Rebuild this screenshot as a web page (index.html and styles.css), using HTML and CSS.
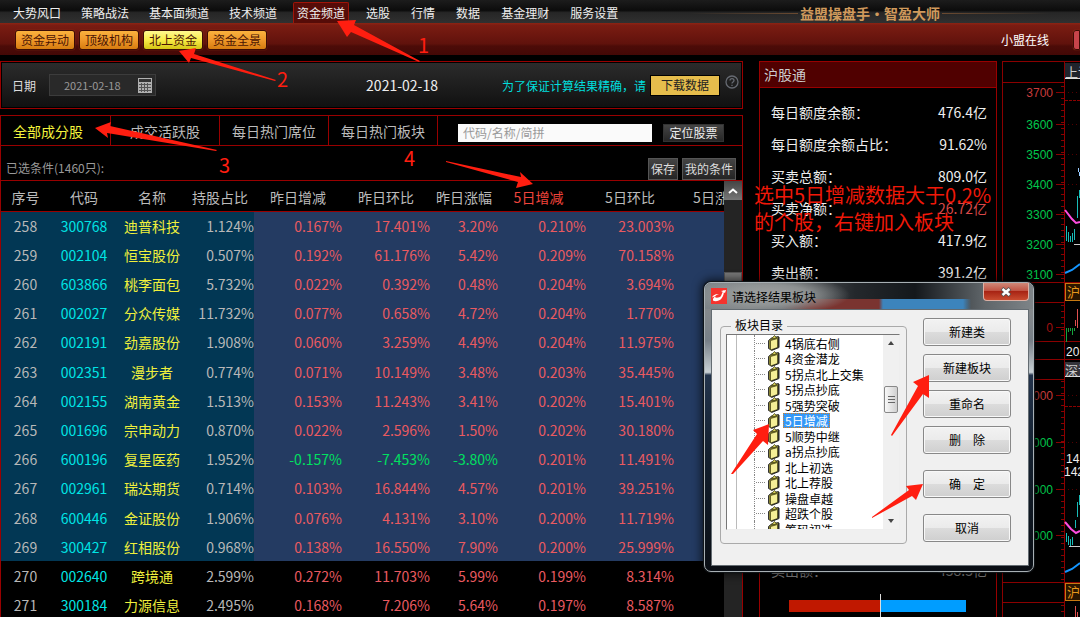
FILE: index.html
```html
<!DOCTYPE html>
<html lang="zh-CN">
<head>
<meta charset="utf-8">
<title>益盟操盘手·智盈大师</title>
<link rel="stylesheet" href="styles.css">
</head>
<body>
<header class="topbar">
  <nav class="menu">
    <a href="#">大势风口</a><a href="#">策略战法</a><a href="#">基本面频道</a><a href="#">技术频道</a><a href="#" class="active">资金频道</a><a href="#">选股</a><a href="#">行情</a><a href="#">数据</a><a href="#">基金理财</a><a href="#">服务设置</a>
  </nav>
  <div class="brand"><span>益盟操盘手·智盈大师</span></div>
</header>
<div class="subbar">
  <button>资金异动</button><button>顶级机构</button><button class="active">北上资金</button><button>资金全景</button>
  <a href="#" class="online">小盟在线</a>
  <button class="edge" aria-label="客服"></button>
</div>
<main class="main">
  <div class="left">
    <section class="datebar">
      <label for="date">日期</label>
      <span class="datebox">
        <input id="date" type="text" value="2021-02-18">
        <svg width="14" height="15" viewBox="0 0 14 15"><rect width="14" height="15" fill="#b0b0b0"/><rect x="1" y="1" width="12" height="3" fill="#333"/><path d="M1 6.500h12M1 9.500h12M1 12.500h12M3.500 5v9M6.500 5v9M9.500 5v9" stroke="#555" stroke-width="1"/></svg>
      </span>
      <strong class="today">2021-02-18</strong>
      <span class="hint">为了保证计算结果精确，请</span>
      <button class="download">下载数据</button>
      <svg class="help" width="14" height="14" viewBox="0 0 14 14" fill="none" stroke="#666a72" stroke-width="1.300"><circle cx="7" cy="7" r="6"/><path d="M5 5.500c0-2.600 4-2.600 4 0c0 1.500-2 1.500-2 3M7 9.800v1.200"/></svg>
    </section>
    <section class="stocks">
      <div class="tabs">
        <a href="#" class="active">全部成分股</a><a href="#">成交活跃股</a><a href="#">每日热门席位</a><a href="#">每日热门板块</a>
        <form class="search">
          <input type="text" placeholder="代码/名称/简拼" aria-label="代码/名称/简拼">
          <button type="button">定位股票</button>
        </form>
      </div>
      <div class="filters"><span>已选条件(1460只):</span><button>保存</button><button>我的条件</button></div>
      <div class="grid">
        <div class="clip">
        <table>
          <colgroup><col class="c-seq"><col class="c-s"><col class="c-s"><col class="c-s"><col class="c-l"><col class="c-l"><col class="c-s"><col class="c-l"><col class="c-l"><col class="c-l"></colgroup>
          <thead><tr><th>序号</th><th>代码</th><th>名称</th><th>持股占比</th><th>昨日增减</th><th>昨日环比</th><th>昨日涨幅</th><th class="sorted">5日增减</th><th>5日环比</th><th>5日涨幅</th></tr></thead>
          <tbody>
          <tr class="sel"><td>258</td><td>300768</td><td>迪普科技</td><td>1.124%</td><td>0.167%</td><td>17.401%</td><td>3.20%</td><td>0.210%</td><td>23.003%</td><td></td></tr>
          <tr class="sel"><td>259</td><td>002104</td><td>恒宝股份</td><td>0.507%</td><td>0.192%</td><td>61.176%</td><td>5.42%</td><td>0.209%</td><td>70.158%</td><td></td></tr>
          <tr class="sel"><td>260</td><td>603866</td><td>桃李面包</td><td>5.732%</td><td>0.022%</td><td>0.392%</td><td>0.48%</td><td>0.204%</td><td>3.694%</td><td></td></tr>
          <tr class="sel"><td>261</td><td>002027</td><td>分众传媒</td><td>11.732%</td><td>0.077%</td><td>0.658%</td><td>4.72%</td><td>0.204%</td><td>1.770%</td><td></td></tr>
          <tr class="sel"><td>262</td><td>002191</td><td>劲嘉股份</td><td>1.908%</td><td>0.060%</td><td>3.259%</td><td>4.49%</td><td>0.204%</td><td>11.975%</td><td></td></tr>
          <tr class="sel"><td>263</td><td>002351</td><td>漫步者</td><td>0.774%</td><td>0.071%</td><td>10.149%</td><td>3.48%</td><td>0.203%</td><td>35.445%</td><td></td></tr>
          <tr class="sel"><td>264</td><td>002155</td><td>湖南黄金</td><td>1.513%</td><td>0.153%</td><td>11.243%</td><td>3.41%</td><td>0.202%</td><td>15.401%</td><td></td></tr>
          <tr class="sel"><td>265</td><td>001696</td><td>宗申动力</td><td>0.870%</td><td>0.022%</td><td>2.596%</td><td>1.50%</td><td>0.202%</td><td>30.180%</td><td></td></tr>
          <tr class="sel"><td>266</td><td>600196</td><td>复星医药</td><td>1.952%</td><td class="dn">-0.157%</td><td class="dn">-7.453%</td><td class="dn">-3.80%</td><td>0.201%</td><td>11.491%</td><td></td></tr>
          <tr class="sel"><td>267</td><td>002961</td><td>瑞达期货</td><td>0.714%</td><td>0.103%</td><td>16.844%</td><td>4.57%</td><td>0.201%</td><td>39.251%</td><td></td></tr>
          <tr class="sel"><td>268</td><td>600446</td><td>金证股份</td><td>1.906%</td><td>0.076%</td><td>4.131%</td><td>3.10%</td><td>0.200%</td><td>11.719%</td><td></td></tr>
          <tr class="sel"><td>269</td><td>300427</td><td>红相股份</td><td>0.968%</td><td>0.138%</td><td>16.550%</td><td>7.90%</td><td>0.200%</td><td>25.999%</td><td></td></tr>
          <tr><td>270</td><td>002640</td><td>跨境通</td><td>2.599%</td><td>0.272%</td><td>11.703%</td><td>5.99%</td><td>0.199%</td><td>8.314%</td><td></td></tr>
          <tr><td>271</td><td>300184</td><td>力源信息</td><td>2.495%</td><td>0.168%</td><td>7.206%</td><td>5.64%</td><td>0.197%</td><td>8.587%</td><td></td></tr>
          </tbody>
        </table>
        </div>
        <div class="vscroll">
          <button aria-label="向上滚动"><svg width="10" height="6" viewBox="0 0 10 6" fill="none" stroke="#fff" stroke-width="2"><path d="M1 5l4-3.500L9 5"/></svg></button>
          <i class="thumb"></i>
        </div>
      </div>
    </section>
  </div>
  <section class="mid">
    <h2>沪股通</h2>
    <dl>
      <div><dt>每日额度余额：</dt><dd>476.4亿</dd></div>
      <div><dt>每日额度余额占比：</dt><dd>91.62%</dd></div>
      <div><dt>买卖总额：</dt><dd>809.0亿</dd></div>
      <div><dt>买卖净额：</dt><dd class="up">26.72亿</dd></div>
      <div><dt>买入额：</dt><dd>417.9亿</dd></div>
      <div><dt>卖出额：</dt><dd>391.2亿</dd></div>
    </dl>
    <dl class="second"><div><dt>卖出额：</dt><dd>438.3亿</dd></div></dl>
    <div class="ratio"><i class="buy"></i><i class="mark"></i><i class="sell"></i></div>
  </section>
  <section class="chart">
    <svg width="78" height="556" viewBox="1002 61 78 556">
      <g stroke="#8b0000" fill="none">
        <path d="M1002.500 61v556M1002 61.500h78M1002 82.500h62M1064.500 61v556M1002 282.500h78M1002 302.500h62M1002 341.500h78M1002 359.500h78M1002 379.500h62M1002 582.500h78M1002 602.500h62"/>
        <path d="M1056 92.500h8M1056 124.500h8M1056 154.500h8M1056 184.500h8M1056 214.500h8M1056 244.500h8M1056 274.500h8M1056 327.500h8M1056 395.500h8M1056 442.500h8M1056 489.500h8M1056 535.500h8"/>
        <path d="M1062.500 86v195M1062.500 305v35M1062.500 381v200M1062.500 605v12" stroke-width="3" stroke-dasharray="1 5"/>
        <path d="M1065 100.500h15M1065 406.500h15" stroke-dasharray="3 1"/>
        <path d="M1068 92.500h12M1068 124.500h12M1068 154.500h12M1068 184.500h12M1068 395.500h12M1068 442.500h12M1068 489.500h12" stroke="#500" stroke-dasharray="1 3"/>
      </g>
      <g class="axis">
        <text class="r" x="1053" y="97">3700</text><text x="1053" y="129">3600</text><text x="1053" y="159">3500</text><text x="1053" y="189">3400</text><text x="1053" y="219">3300</text><text x="1053" y="249">3200</text><text x="1053" y="279">3100</text>
        <text class="d" x="1053" y="332">0</text>
        <text class="r" x="1053" y="400">15000</text><text x="1053" y="447">14000</text><text x="1053" y="494">13000</text><text x="1053" y="540">12000</text>
      </g>
      <rect x="1065" y="63" width="15" height="16" fill="#20242c"/><rect x="1065" y="362" width="15" height="15" fill="#34343a"/>
      <path d="M1065 78.500h15M1065 376.500h15" stroke="#ddd"/>
      <g class="tag"><text x="1065" y="77">上证</text><text x="1065" y="375">深证</text><text class="num" x="1066" y="356">20</text><text class="num" x="1066" y="463">14</text><text class="num" x="1064" y="476">142</text></g>
      <g fill="#2b1600" stroke="#c77a12"><rect x="1065.500" y="283.500" width="24" height="17"/><rect x="1065.500" y="583.500" width="24" height="17"/></g>
      <g class="orange"><text x="1067" y="297">沪</text><text x="1067" y="597">沪</text></g>
      <g fill="none" stroke-width="2">
        <path d="M1065 210l7 9l4 4l4-1M1065 522l6 7l5 4l4-2" stroke="#ff4de0"/>
        <path d="M1065 273l7-3l8-6M1065 572l7-3l8-6" stroke="#1496ff"/>
      </g>
      <path d="M1066.500 226v15M1068.500 232v10M1070.500 236v6M1072.500 233v9M1074.500 229v11M1077.500 196v22M1079.500 190v8M1066.500 533v9M1068.500 536v9M1070.500 539v7M1072.500 537v8M1075.500 520v8M1077.500 502v15M1079.500 495v10" stroke="#18bcb8"/>
      <path d="M1078.500 168v4M1079.500 172v4" stroke="#9cf"/>
      <path d="M1074 244.500h6M1069 546.500h11" stroke="#ccc"/>
      <path d="M1066.500 328v14M1068.500 328v4M1070.500 328v3M1072.500 328v7M1074.500 328v3" stroke="#15a33c"/>
      <path d="M1077.500 309v19M1075.500 320v6M1075.500 606v11M1077.500 612v5" stroke="#e05050"/>
    </svg>
  </section>
</main>

<div class="dialog" role="dialog" aria-labelledby="dlg-title">
  <div class="titlebar">
    <svg width="16" height="16" viewBox="0 0 16 16"><rect width="16" height="16" fill="#f5332e"/><path d="M1 9.500C2 7 5 5.500 8 6c-2 .5-4 1.500-4 3c1 1.500 5 .5 6-1c1-2 1-3.500 3-6c0 3-.5 6-2.500 8.500C8.500 13 4 14 2 12.500C1.500 11 3 9 4.500 8z" fill="#fff"/><path d="M10 3l5-1-1 3z" fill="#fff"/></svg>
    <span id="dlg-title">请选择结果板块</span>
    <button class="close" aria-label="关闭"><svg width="12" height="10" viewBox="0 0 12 10"><path d="M2 1.500l8 7M10 1.500l-8 7" stroke="#555" stroke-width="4"/><path d="M2.500 2l7 6M9.500 2l-7 6" stroke="#fff" stroke-width="2.400"/></svg></button>
  </div>
  <div class="client">
    <fieldset>
      <legend>板块目录</legend>
      <div class="treebox">
        <svg class="defs" width="0" height="0"><symbol id="book" viewBox="0 0 13 16"><path d="M1.500 5.500l3-2.500l7-1.500v10.500l-7 3l-3-1.500z" fill="#8a8434" stroke="#333"/><path d="M3.500 5.500l7-2v9l-7 2.500z" fill="#f4ee96" stroke="#4a4816" stroke-width=".8"/><path d="M4.500 4l3-3.500l2 2.500z" fill="#e8e060" stroke="#3a380e" stroke-width=".8"/><path d="M12 2v10.500l-7.500 3" fill="none" stroke="#222"/></symbol></svg>
        <ul class="tree">
          <li><svg width="13" height="16"><use href="#book"/></svg><span>4锅底右侧</span></li>
          <li><svg width="13" height="16"><use href="#book"/></svg><span>4资金潜龙</span></li>
          <li><svg width="13" height="16"><use href="#book"/></svg><span>5拐点北上交集</span></li>
          <li><svg width="13" height="16"><use href="#book"/></svg><span>5拐点抄底</span></li>
          <li><svg width="13" height="16"><use href="#book"/></svg><span>5强势突破</span></li>
          <li class="picked"><svg width="13" height="16"><use href="#book"/></svg><span>5日增减</span></li>
          <li><svg width="13" height="16"><use href="#book"/></svg><span>5顺势中继</span></li>
          <li><svg width="13" height="16"><use href="#book"/></svg><span>a拐点抄底</span></li>
          <li><svg width="13" height="16"><use href="#book"/></svg><span>北上初选</span></li>
          <li><svg width="13" height="16"><use href="#book"/></svg><span>北上荐股</span></li>
          <li><svg width="13" height="16"><use href="#book"/></svg><span>操盘卓越</span></li>
          <li><svg width="13" height="16"><use href="#book"/></svg><span>超跌个股</span></li>
          <li><svg width="13" height="16"><use href="#book"/></svg><span>筹码初选</span></li>
        </ul>
        <div class="treescroll"><b class="tri up"></b><i></i><b class="tri down"></b></div>
      </div>
    </fieldset>
    <div class="actions">
      <button>新建类</button><button>新建板块</button><button>重命名</button><button>删　除</button><button class="gap">确　定</button><button class="gap">取消</button>
    </div>
  </div>
</div>

<p class="note">选中5日增减数据大于0.2%<br>的个股，右键加入板块</p>
<svg class="arrows" width="1080" height="617" viewBox="0 0 1080 617">
  <path d="M337 21L356 20L354 25L420 61L419 62L351 32L347 37Z"/>
  <path d="M179 51L196 48L194 54L276 80L275 81L191 58L189 63Z"/>
  <path d="M95 128L111 122L110 126L217 150L216 151L107 133L108 138Z"/>
  <path d="M446 161L521 177L520 172L533 184L516 188L518 182L446 162Z"/>
  <path d="M769 424L753 430L757 434L731 474L733 474L763 441L768 445Z"/>
  <path d="M929 375L913 382L918 386L891 435L892 436L923 394L929 398Z"/>
  <path d="M923 484L906 486L909 490L872 517L872 518L912 496L916 500Z"/>
  <text x="418" y="53">1</text><text x="277" y="87">2</text><text x="219" y="173">3</text><text x="404" y="166">4</text>
</svg>
</body>
</html>
```
FILE: styles.css
```css
* { box-sizing: border-box; }
body {
  margin: 0;
  height: 100vh;
  overflow: hidden;
  display: flex;
  flex-direction: column;
  position: relative;
  background: #000;
  color: #ddd;
  font-family: "Noto Sans CJK SC", "Noto Sans", sans-serif;
  font-size: 12px;
}
a { color: inherit; text-decoration: none; }
button, input { font: inherit; margin: 0; padding: 0; }
h2, dl, dd, ul, p { margin: 0; padding: 0; font-weight: 400; }
svg { flex: none; }

.topbar { display: flex; flex: none; height: 23px; background: linear-gradient(#1c1c1c, #0c0c0c 45%, #262626 55%, #303030); }
.menu { display: flex; padding-left: 3px; white-space: nowrap; }
.menu a { margin: 2px 6px 0; padding: 0 4px; line-height: 22px; color: #eee; }
.menu .active { border: 1px solid #a01408; border-bottom: 0; border-radius: 2px 2px 0 0; background: #560c08; padding: 0 3px; line-height: 20px; height: 22px; }
.menu .active ~ a { margin-left: 7px; }
.brand { display: flex; flex: 1; align-items: center; gap: 2px; margin-left: 62px; margin-right: 30px; padding-top: 3px; color: #d09a5c; font-size: 14px; font-weight: 700; white-space: nowrap; line-height: 20px; }
.brand::before, .brand::after { content: ""; flex: 1; height: 1px; background: linear-gradient(90deg, transparent, #6b4a30); }
.brand::after { background: linear-gradient(90deg, #6b4a30, transparent); }

.subbar { display: flex; flex: none; align-items: center; gap: 4px; height: 32px; padding: 1px 0 0 15px; background: linear-gradient(#8c2414, #7a1c12 8%, #60120c 65%, #4c0c08 72%, #440806); }
.subbar button { width: 60px; height: 20px; border: 1px solid #3c0c04; border-radius: 3px; background: linear-gradient(#f9b23e, #f0982a 50%, #d57c10); color: #4a1404; line-height: 18px; box-shadow: 0 0 1px #b04a20; }
.subbar .active { background: linear-gradient(#fff890, #f8ec48 50%, #d4c414); }
.online { margin-left: auto; margin-right: 20px; color: #fff; }
.subbar .edge { width: 7px; border-radius: 3px 0 0 3px; background: #c8444a; }

.main { display: flex; flex: 1; min-height: 0; padding-top: 6px; }
.left { display: flex; flex: 1; flex-direction: column; gap: 6px; min-width: 0; margin-right: 16px; }
.datebar { display: flex; flex: none; align-items: center; height: 48px; padding: 0 3px 0 11px; border: 1px solid #900; background: linear-gradient(#2c2c2c, #101010); box-shadow: inset 0 0 0 1px #000; white-space: nowrap; }
.datebox { display: flex; align-items: center; width: 107px; height: 22px; margin-left: 13px; padding: 0 3px 0 14px; border: 1px solid #3c3c3c; background: #292929; }
.datebox input { flex: 1; width: 60px; border: 0; background: none; color: #999; font-size: 11px; }
.today { margin-left: auto; font-size: 14px; font-weight: 400; color: #eee; }
.hint { margin-left: 64px; color: #00dede; }
.download { width: 70px; height: 21px; margin-left: 4px; border: 1px solid #000; background: #e6bd4c; color: #222; line-height: 18px; }
.help { margin: -6px 0 0 5px; }

.stocks { display: flex; flex: 1; flex-direction: column; min-height: 0; border: 1px solid #900; border-bottom: 0; }
.tabs { display: flex; flex: none; height: 30px; border-bottom: 1px solid #900; font-size: 14px; color: #bbb; white-space: nowrap; }
.tabs a { width: 109px; border-right: 1px solid #900; line-height: 30px; text-align: center; }
.tabs .active { width: 110px; padding-left: 12px; color: #f4f43c; text-align: left; }
.search { display: flex; flex: 1; align-items: center; padding: 4px 18px 0 20px; }
.search input { flex: 1; min-width: 0; height: 18px; margin-right: 11px; padding-left: 5px; border: 0; background: #fafafa; color: #333; font-size: 12px; }
.search input::placeholder { color: #999; }
.search button { width: 61px; height: 18px; border: 1px solid #333; background: linear-gradient(#444, #262626); color: #eee; font-size: 12px; line-height: 14px; }
.filters { display: flex; flex: none; align-items: flex-end; gap: 4px; height: 35px; padding: 0 6px 0 5px; border-bottom: 1px solid #900; color: #999; white-space: nowrap; }
.filters span { margin-right: auto; line-height: 24px; }
.filters button { height: 22px; padding: 0 2px; border: 1px solid #555; background: linear-gradient(#444, #242424); color: #ddd; line-height: 18px; }
.grid { display: flex; flex: 1; min-height: 0; }
.clip { flex: 1; overflow: hidden; min-width: 0; }
table { width: 760px; table-layout: fixed; border-collapse: collapse; font-size: 14px; line-height: 20px; white-space: nowrap; }
.c-seq { width: 49px; } .c-s { width: 68px; } .c-l { width: 88px; }
th { height: 30px; padding: 3px 0 0; border-bottom: 1px solid #900; font-weight: 400; color: #bbb; }
th.sorted { padding-right: 7px; color: #f0443c; }
td { height: 29px; padding: 0; text-align: right; color: #ea5a60; }
tr:nth-child(5n) td { height: 30px; }
td:nth-child(1), td:nth-child(2), td:nth-child(3) { text-align: center; }
td:nth-child(1), td:nth-child(4) { color: #b8b8b8; }
td:nth-child(2) { color: #00e4e4; }
td:nth-child(3) { color: #f0f03c; }
td.dn { color: #00e060; }
.sel td { background: #243b62; }
.sel td:nth-child(-n+4) { background: #023754; }
.vscroll { display: flex; flex: none; flex-direction: column; width: 18px; background: #242424; }
.vscroll button { display: flex; align-items: center; justify-content: center; height: 19px; border: 0; background: linear-gradient(#444, #777); }
.thumb { height: 60px; margin-top: 72px; border: 1px solid #555; background: #777; }

.mid { display: flex; flex: none; flex-direction: column; width: 238px; margin-right: 5px; border: 1px solid #900; border-bottom: 0; }
.mid h2 { flex: none; height: 26px; padding-left: 4px; border-bottom: 1px solid #900; background: #500000; color: #ccc; font-size: 14px; line-height: 25px; }
.mid dl { padding: 8px 9px 0 11px; font-size: 14px; }
.mid dl div { display: flex; justify-content: space-between; height: 32px; line-height: 32px; color: #eee; }
.mid .up { color: #d84848; }
.mid .second { margin-top: auto; padding-top: 0; }
.mid .second div { color: #888; }
.ratio { display: flex; flex: none; align-items: center; height: 23px; margin: 8px 30px 0 29px; }
.ratio .buy { flex: 52; height: 12px; background: #c01800; }
.ratio .mark { width: 1px; height: 100%; background: #ddd; }
.ratio .sell { flex: 49; height: 12px; background: #009dff; }
.chart { flex: none; width: 78px; overflow: hidden; }
.axis { font: 12px "Liberation Sans", sans-serif; text-anchor: end; fill: #00c84c; }
.axis .r { fill: #c83c3c; } .axis .d { fill: #a01010; }
.tag { fill: #ccc; font-size: 13px; }
.num { font: 12px "Liberation Sans", sans-serif; fill: #eee; }
.orange { fill: #e8981c; font-size: 13px; }

.dialog {
  position: absolute; left: 704px; top: 282px; display: flex; flex-direction: column; width: 330px; height: 290px; padding: 0 4px 5px 6px;
  border: 1px solid #a8b0b4; border-radius: 7px; color: #000;
  background: linear-gradient(#6f7478, #85898c 10%, #788088 20%, #c8d0d4 31%, #23344c 32%, #14202e 60%, #0a0e14);
  box-shadow: 0 0 1px 1px #101418, 0 0 8px 3px rgba(0, 0, 0, .6);
}
.titlebar {
  display: flex; flex: none; align-items: center; height: 26px; gap: 5px; margin: 0 -4px 0 -6px; padding-left: 6px; border-radius: 6px 6px 0 0;
  background:
    radial-gradient(ellipse 80px 20px at 65px 12px, #a0a2a2, rgba(150, 154, 154, .85) 50%, transparent),
    linear-gradient(90deg, transparent 76px, #7a3430 106px 174px, #3c84bc 178px 258px, transparent 266px) 0 100%/100% 10px no-repeat,
    linear-gradient(90deg, #7d8488, #7a7e82 45px, #24282c 150px, #14181c 210px, #60666a 280px, #7e8488);
}
.close { display: flex; align-self: flex-start; align-items: center; justify-content: center; width: 46px; height: 18px; margin: 0 4px 0 auto; border: 1px solid #ddb0a4; border-top: 0; border-radius: 0 0 4px 4px; background: linear-gradient(#d08878, #c05444 45%, #a82414 50%, #c84c30); }
.client { display: grid; flex: 1; grid-template-columns: 187px 88px; justify-content: space-between; align-items: start; padding: 8px 17px 0 8px; border: 1px solid #646c72; background: #f0f0f0; }
fieldset { display: block; min-width: 0; height: 226px; margin: 0; padding: 0 6px 14px 5px; border: 1px solid #aaa; border-radius: 4px; }
legend { height: 16px; margin-left: 5px; padding: 0 4px; line-height: 14px; }
.treebox { display: flex; height: 196px; overflow: hidden; border: 1px solid #777; border-right-color: #eee; border-bottom-color: #eee; background: #fff; }
.defs { position: absolute; }
.tree { flex: 1; padding-left: 27px; list-style: none; background: linear-gradient(90deg, #bbb, #bbb) 9px 0/1px 100% no-repeat; }
.tree li { display: flex; align-items: center; height: 16px; border-left: 1px dotted #888; white-space: nowrap; line-height: 15px; }
.tree li:nth-child(even) { height: 15px; }
.tree li::before { content: ""; width: 9px; margin: 0 2px 0 1px; border-top: 1px dotted #888; }
.tree span { margin-left: 3px; padding: 0 1px; border: 1px solid transparent; line-height: 13px; }
.tree .picked span { border: 1px dotted #e08020; background: #3498f8; color: #fff; }
.treescroll { display: flex; flex: none; flex-direction: column; align-items: center; width: 16px; padding: 6px 0; background: #f0f0f0; }
.treescroll i { width: 14px; height: 27px; margin: 41px 0 auto; border: 1px solid #888; border-radius: 2px; background: linear-gradient(#666, #666) center 9px/7px 1px no-repeat, linear-gradient(#666, #666) center 12px/7px 1px no-repeat, linear-gradient(#666, #666) center 15px/7px 1px no-repeat, linear-gradient(90deg, #f8f8f8, #d0d0d0); }
.tri { border: 3px solid transparent; }
.tri.up { border-top: 0; border-bottom: 4px solid #444; }
.tri.down { border-bottom: 0; border-top: 4px solid #444; }
.actions { display: flex; flex-direction: column; gap: 8px; }
.actions button { height: 28px; border: 1px solid #888; border-radius: 3px; background: linear-gradient(#f2f2f2, #ebebeb 50%, #dcdcdc 50%, #cfcfcf); color: #000; line-height: 24px; box-shadow: inset 0 0 0 1px #f8f8f8; }
.actions .gap { margin-top: 8px; }

.note { position: absolute; left: 754px; top: 181px; color: #f01808; font-size: 20px; line-height: 27px; white-space: nowrap; }
.arrows { position: absolute; left: 0; top: 0; pointer-events: none; fill: #ff1e10; font-size: 20px; }
```
